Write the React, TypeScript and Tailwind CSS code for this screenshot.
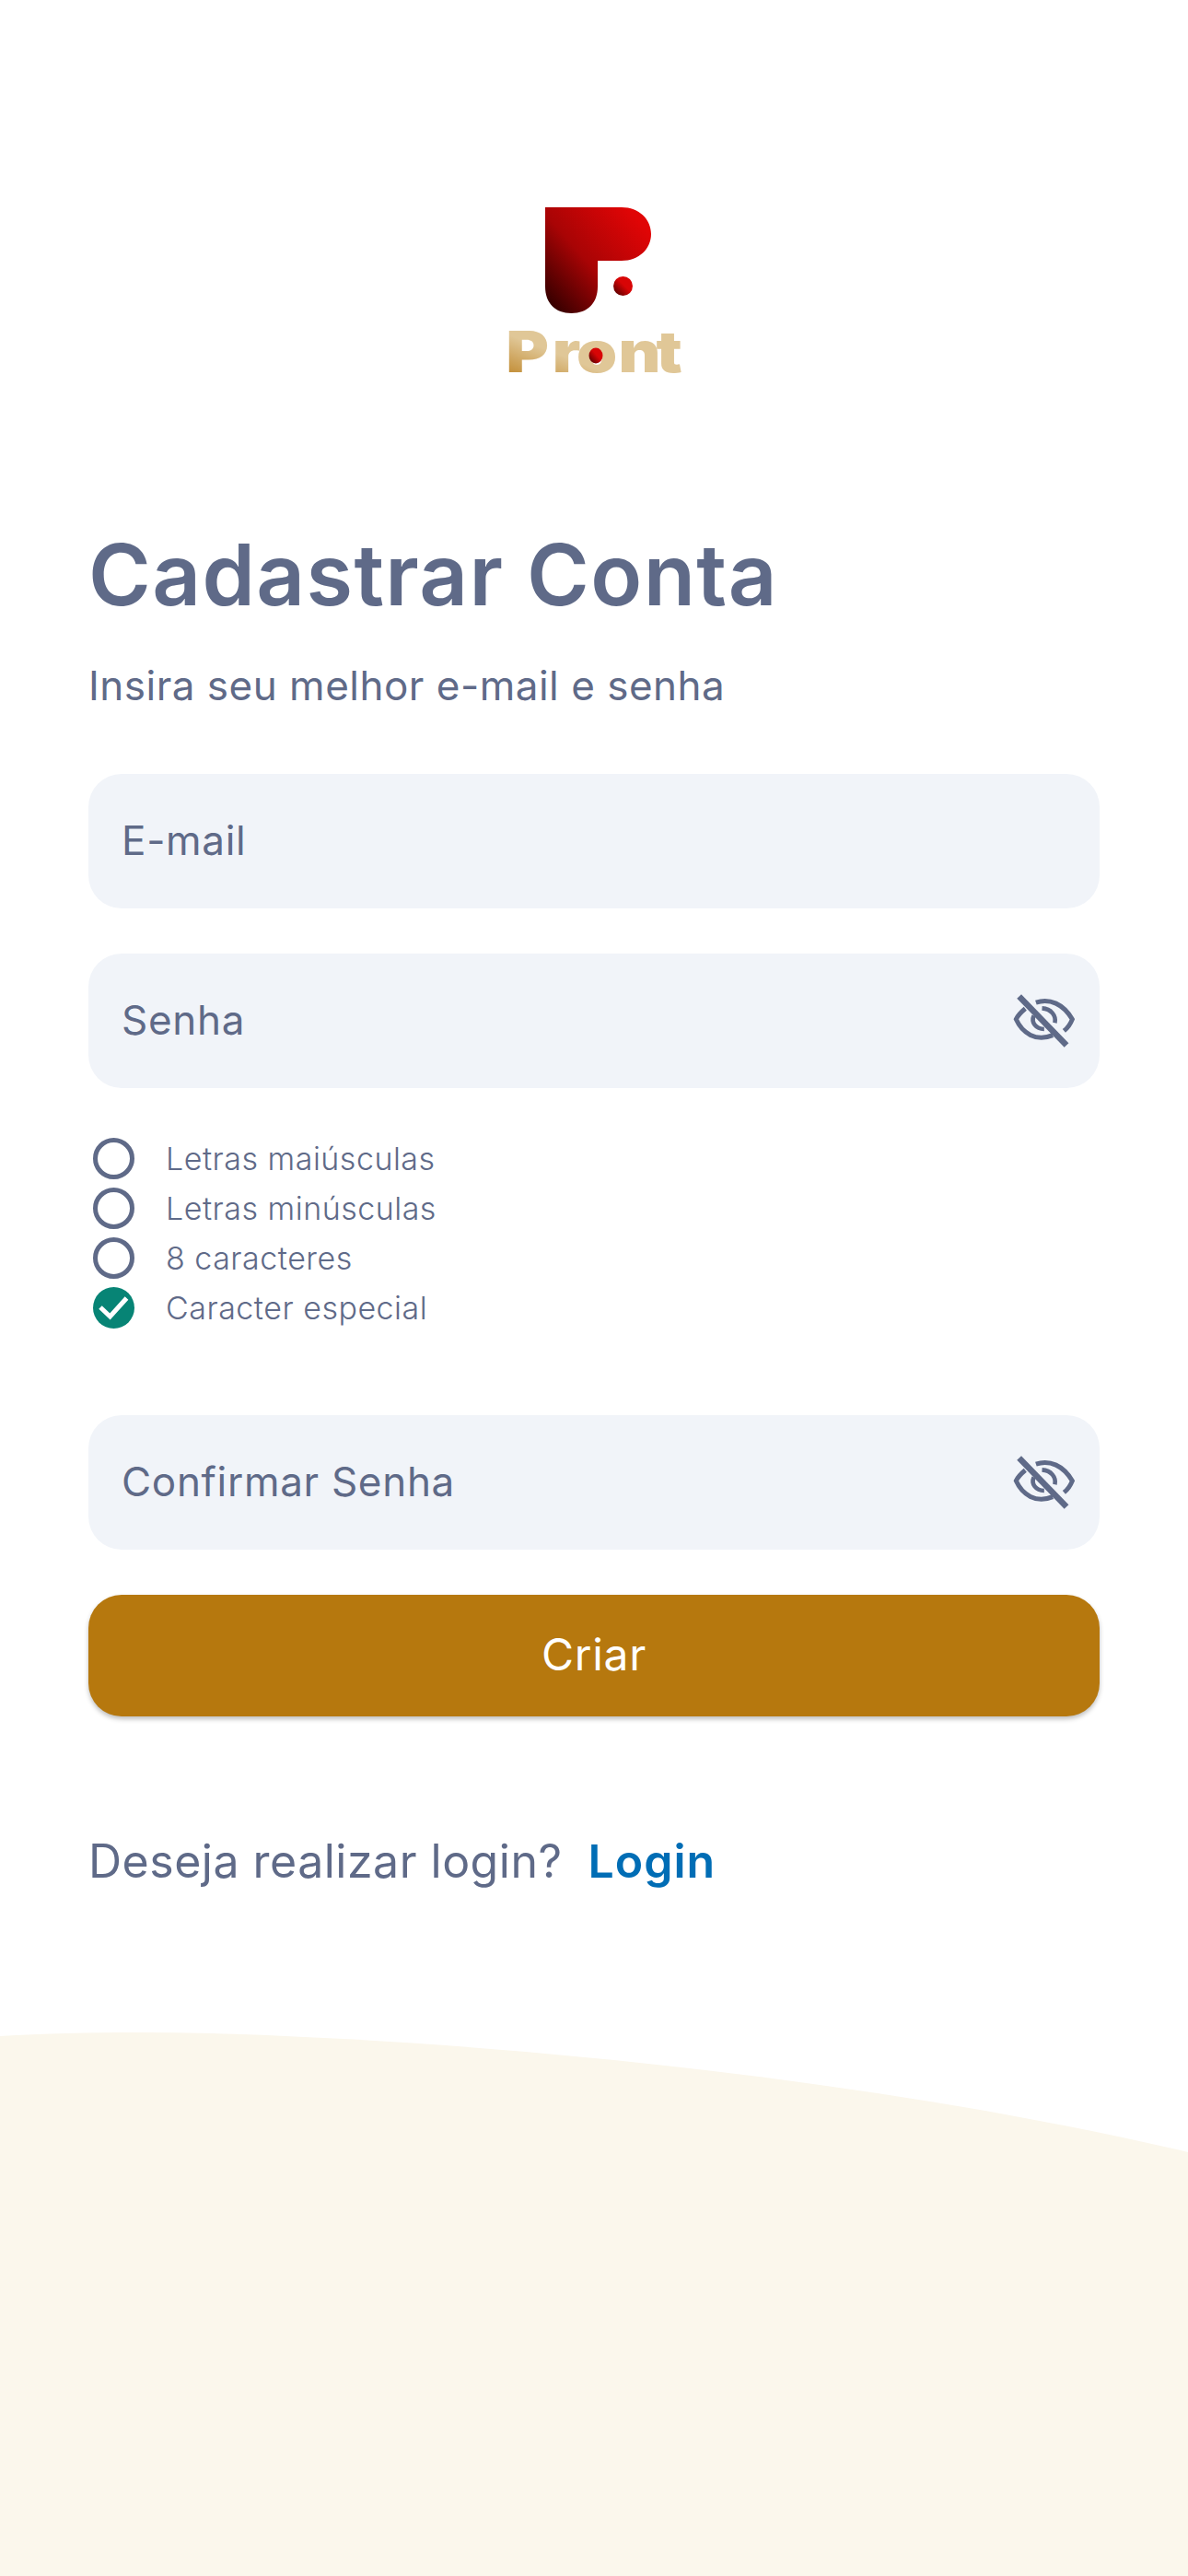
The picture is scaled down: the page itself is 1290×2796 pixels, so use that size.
const font = { fontFamily: '"Inter", "Noto Sans", sans-serif' };

function EyeOff() {
  return (
    <svg className="h-[60px] w-[68px] shrink-0" viewBox="120 55 205 180" fill="none" stroke="#5f6a88" aria-hidden>
      <path d="M195 85C240 70 285 90 314 140C308 155 299 168 287 178" strokeWidth="15" />
      <path d="M160 105C148 115 136 126 130 140C150 185 195 215 250 192" strokeWidth="15" />
      <path d="M215 104C245 106 262 128 257 152" strokeWidth="14" />
      <path d="M188 128C178 150 195 172 222 172" strokeWidth="14" />
      <path d="M140 65L295 225" strokeWidth="20" />
    </svg>
  );
}

function Field({ label, password }: { label: string; password?: boolean }) {
  return (
    <div className="flex h-[146px] items-center justify-between rounded-[36px] bg-[#f1f4f9] pl-9 pr-[26px]">
      <span className="pb-[3px] text-[44px] tracking-[0.7px] text-[#5f6a88]">{label}</span>
      {password && <EyeOff />}
    </div>
  );
}

function Rule({ label, done }: { label: string; done?: boolean }) {
  return (
    <div className="flex h-[54px] items-center gap-[34px] pl-[5px]">
      {done ? (
        <span className="flex h-[45px] w-[45px] items-center justify-center rounded-full bg-[#078475]">
          <svg className="h-[45px] w-[45px]" viewBox="0 0 45 45" fill="none" stroke="#fff" strokeWidth="5">
            <path d="M8 22L18.500 32L36.500 12" />
          </svg>
        </span>
      ) : (
        <span className="h-[45px] w-[45px] rounded-full border-[5px] border-[#5f6a88]" />
      )}
      <span className="text-[34px] font-light tracking-[0.5px] text-[#5f6a88]">{label}</span>
    </div>
  );
}

function Logo() {
  return (
    <svg className="h-[196px] w-[196px]" viewBox="-6 0 196 196" aria-hidden>
      <defs>
        <linearGradient id="mark" x1="0.1" y1="0.95" x2="0.95" y2="0.2">
          <stop offset="0" stopColor="#3a0000" />
          <stop offset="0.45" stopColor="#a80405" />
          <stop offset="1" stopColor="#e00506" />
        </linearGradient>
        <linearGradient id="dot" x1="0.1" y1="0.9" x2="0.55" y2="0.45">
          <stop offset="0" stopColor="#5a0000" />
          <stop offset="1" stopColor="#d80506" />
        </linearGradient>
        <linearGradient id="gold" x1="0" y1="1" x2="0.38" y2="0.62">
          <stop offset="0" stopColor="#b87a16" />
          <stop offset="1" stopColor="#e0c797" />
        </linearGradient>
      </defs>
      <path
        d="M39 0H122C141 0 154 13 154 29C154 45 141 58 122 58H96V86C96 104 85 115 67.500 115C50 115 39 104 39 86Z"
        fill="url(#mark)"
      />
      <circle cx="123.500" cy="85.500" r="10.500" fill="url(#dot)" />
      <text y="179" transform="scale(1.14 1)" fontFamily="Inter, sans-serif" fontWeight="900" fontSize="62">
        <tspan x="-3" fill="url(#gold)">P</tspan>
        <tspan x="41" fill="url(#gold)">r</tspan>
        <tspan x="64" fill="url(#gold)">o</tspan>
        <tspan x="104" fill="url(#gold)">n</tspan>
        <tspan x="140" fill="url(#gold)">t</tspan>
      </text>
      <ellipse cx="94" cy="161" rx="7.500" ry="8.500" fill="url(#dot)" />
    </svg>
  );
}

export default function App() {
  return (
    <div className="flex h-[2796px] w-[1290px] flex-col overflow-hidden bg-white" style={font}>
      <div className="flex justify-center pt-[225px]">
        <Logo />
      </div>
      <main className="px-24 pt-[147px]">
        <h1 className="text-[92px] leading-[112px] font-semibold tracking-[1.4px] text-[#5f6a88]">Cadastrar Conta</h1>
        <p className="mt-[36px] text-[44px] leading-[56px] tracking-[0.5px] text-[#5f6a88]">Insira seu melhor e-mail e senha</p>
        <div className="mt-[68px] flex flex-col gap-[49px]">
          <Field label="E-mail" />
          <Field label="Senha" password />
        </div>
        <div className="mt-[49px] flex flex-col">
          <Rule label="Letras maiúsculas" />
          <Rule label="Letras minúsculas" />
          <Rule label="8 caracteres" />
          <Rule label="Caracter especial" done />
        </div>
        <div className="mt-[90px]">
          <Field label="Confirmar Senha" password />
        </div>
        <button
          type="button"
          className="mt-[49px] h-[132px] w-full rounded-[36px] bg-[#b6780e] pb-[3px] text-[48px] tracking-[0.7px] text-white shadow-[0_3px_5px_rgba(0,0,0,0.25)]"
        >
          Criar
        </button>
        <p className="mt-[127px] flex gap-7 text-[50px] leading-[60px] tracking-[0.5px] text-[#5f6a88]">
          <span>Deseja realizar login?</span>
          <span className="font-semibold tracking-[1px] text-[#006db5]">Login</span>
        </p>
      </main>
      <svg className="mt-auto h-[590px] w-[1290px] shrink-0" viewBox="0 0 1290 590" preserveAspectRatio="none" aria-hidden>
        <path d="M0 4C70 0 150 -1 230 1C540 10 950 50 1290 130V590H0Z" fill="#fbf7ec" />
      </svg>
    </div>
  );
}
